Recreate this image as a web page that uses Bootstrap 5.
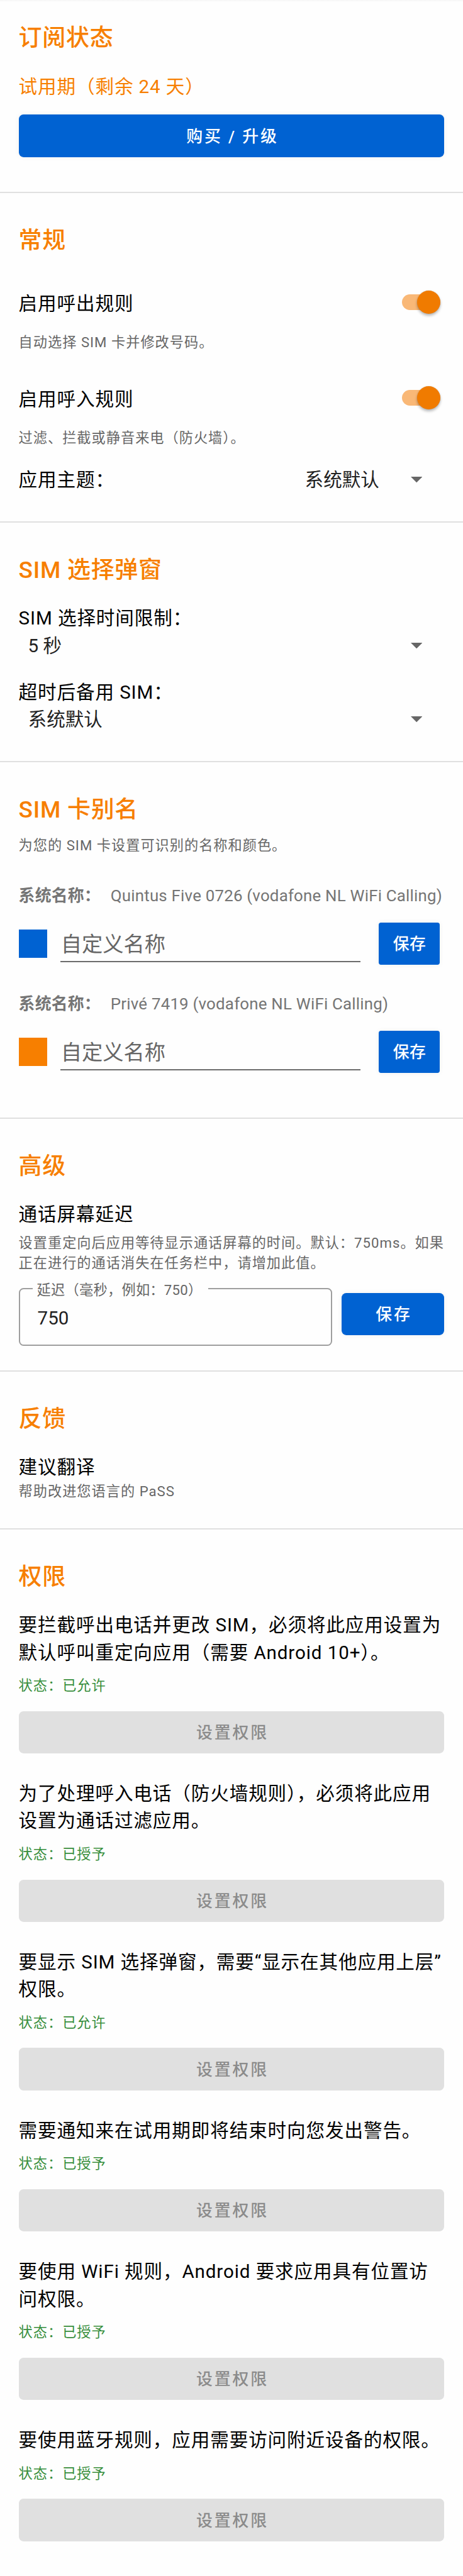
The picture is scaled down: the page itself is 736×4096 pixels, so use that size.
<!DOCTYPE html>
<html lang="zh-CN">
<head>
  <meta charset="UTF-8">
  <meta name="viewport" content="width=device-width, initial-scale=1">
  <title>设置</title>
  <link href="https://cdn.jsdelivr.net/npm/bootstrap@5.3.2/dist/css/bootstrap.min.css" rel="stylesheet">
  <style>
    body {
      font-family: Roboto, "Noto Sans CJK SC", sans-serif;
      color: #000;
      background: #fefefe;
    }
    .topline { height: 3px; margin-bottom: -3px; background: linear-gradient(#f5f5f5, #fefefe); }
    .section {
      padding: 54px 29.6px 0;
      border-bottom: 2px solid #e0e0e0;
    }
    .section h2 {
      margin: 0 0 -1px;
      font-size: 36.96px;
      line-height: 44px;
      font-weight: 500;
      letter-spacing: .75px;
      color: #f77f00;
    }
    #subscription { height: 307px; padding-top: 39px; }
    #general { height: 524px; }
    #popup { height: 381px; }
    #aliases { height: 567px; }
    #advanced { height: 402px; }
    #feedback { height: 251px; }
    #permissions { height: 1664px; border-bottom: 0; }

    .item-title { font-size: 29.57px; line-height: 36px; letter-spacing: .9px; white-space: nowrap; }
    .item-hint { font-size: 22.18px; line-height: 32px; letter-spacing: 1.02px; color: #666; white-space: nowrap; }
    .trial { margin-top: 38px; color: #f77f00; }

    .btn-app {
      --bs-btn-color: #fff;
      --bs-btn-bg: #0062d2;
      --bs-btn-hover-color: #fff;
      --bs-btn-hover-bg: #0056ba;
      --bs-btn-disabled-color: #8b8b8b;
      --bs-btn-disabled-bg: #e0e0e0;
      --bs-btn-disabled-opacity: 1;
      height: 67.4px;
      padding: 1.5px 0 0 3px;
      border: 0;
      border-radius: 7.4px;
      font-size: 25.87px;
      line-height: 66px;
      font-weight: 500;
      letter-spacing: 2.9px;
      box-shadow: 0 0 8px rgba(0, 0, 0, .06);
    }
    .btn-app:disabled { box-shadow: none; }

    /* switch */
    .toggle {
      width: 60.6px;
      height: 25.9px;
      margin: -5px 6.4px 0 0;
      border-radius: 13px;
      background: #f9b877;
    }
    .toggle span {
      width: 37px;
      height: 37px;
      border-radius: 50%;
      background: #f07b00;
      box-shadow: 0 3px 4px rgba(0, 0, 0, .28), 0 0 2px rgba(0, 0, 0, .12);
    }

    /* spinner */
    .picker { font-size: 29.57px; line-height: 36px; color: #212121; padding-right: 35.2px; }
    .picker svg { width: 18.4px; height: 9.3px; fill: #666; }

    .sim-name { font-size: 25.87px; line-height: 32px; color: #757575; white-space: nowrap; }
    .sim-name b { width: 146.2px; letter-spacing: .2px; }
    .sim-name span { letter-spacing: .21px; }
    .sim-row { height: 67px; margin-top: 27.5px; }
    .swatch { width: 45px; height: 45px; }
    .alias-input {
      width: 476.6px;
      height: 48px;
      margin: 10px 29.4px 0 21.6px;
      padding: 0 .5px 6px;
      border: 0;
      border-bottom: 2px solid #6b6b6b;
      background: none;
      font-size: 33.27px;
      line-height: 40px;
      outline: 0;
    }
    .alias-input::placeholder { color: #666; opacity: 1; }
    .btn-alias { width: 96.8px; padding-left: 1px; border-radius: 3.7px; letter-spacing: .4px; }

    .outlined { width: 498.4px; height: 92px; border: 2px solid #9e9e9e; border-radius: 7.4px; }
    .outlined label {
      top: -15px;
      left: 20px;
      width: 279.4px;
      padding-left: 7px;
      font-size: 22.18px;
      line-height: 32px;
      letter-spacing: .3px;
      color: #666;
      background: #fefefe;
      white-space: nowrap;
    }
    .outlined input {
      padding: 4px 28px 0;
      border: 0;
      background: none;
      font-size: 29.57px;
      color: #212121;
      outline: 0;
    }

    .permission { margin-bottom: 43px; }
    .permission .item-title { line-height: 43.2px; }
    .permission .state { margin: 14.5px 0 24.5px; color: #388e3c; }
  </style>
</head>
<body>
  <div class="topline"></div>

  <section class="section" id="subscription">
    <h2>订阅状态</h2>
    <div class="item-title trial">试用期（剩余 24 天）</div>
    <button class="btn btn-app w-100 d-block" style="margin-top: 26.4px">购买 / 升级</button>
  </section>

  <section class="section" id="general">
    <h2>常规</h2>
    <div class="d-flex justify-content-between align-items-center" style="margin-top: 61px">
      <div class="item-title">启用呼出规则</div>
      <div class="toggle d-flex justify-content-end align-items-center"><span></span></div>
    </div>
    <div class="item-hint" style="margin-top: 27px">自动选择 SIM 卡并修改号码。</div>
    <div class="d-flex justify-content-between align-items-center" style="margin-top: 57px">
      <div class="item-title">启用呼入规则</div>
      <div class="toggle d-flex justify-content-end align-items-center"><span></span></div>
    </div>
    <div class="item-hint" style="margin-top: 27px">过滤、拦截或静音来电（防火墙）。</div>
    <div class="d-flex justify-content-between" style="margin-top: 33px">
      <div class="item-title">应用主题：</div>
      <div class="picker d-flex align-items-center" style="gap: 50px">系统默认
        <svg viewBox="0 0 10 5"><path d="M0 0h10L5 5z"/></svg>
      </div>
    </div>
  </section>

  <section class="section" id="popup">
    <h2>SIM 选择弹窗</h2>
    <div class="item-title" style="margin-top: 37px">SIM 选择时间限制：</div>
    <div class="picker d-flex justify-content-between align-items-center" style="margin-top: 7.5px; padding-left: 15px">5 秒
      <svg viewBox="0 0 10 5"><path d="M0 0h10L5 5z"/></svg>
    </div>
    <div class="item-title" style="margin-top: 38px">超时后备用 SIM：</div>
    <div class="picker d-flex justify-content-between align-items-center" style="margin-top: 7.5px; padding-left: 15px">系统默认
      <svg viewBox="0 0 10 5"><path d="M0 0h10L5 5z"/></svg>
    </div>
  </section>

  <section class="section" id="aliases">
    <h2>SIM 卡别名</h2>
    <div class="item-hint" style="margin-top: 19px">为您的 SIM 卡设置可识别的名称和颜色。</div>
    <div class="sim-name d-flex" style="margin-top: 47.5px"><b>系统名称：</b><span>Quintus Five 0726 (vodafone NL WiFi Calling)</span></div>
    <div class="sim-row d-flex align-items-center">
      <div class="swatch" style="background: #0062d2"></div>
      <input class="alias-input" type="text" placeholder="自定义名称">
      <button class="btn btn-app btn-alias">保存</button>
    </div>
    <div class="sim-name d-flex" style="margin-top: 45.5px"><b>系统名称：</b><span>Privé 7419 (vodafone NL WiFi Calling)</span></div>
    <div class="sim-row d-flex align-items-center">
      <div class="swatch" style="background: #f77f00"></div>
      <input class="alias-input" type="text" placeholder="自定义名称">
      <button class="btn btn-app btn-alias">保存</button>
    </div>
  </section>

  <section class="section" id="advanced">
    <h2>高级</h2>
    <div class="item-title" style="margin-top: 37px">通话屏幕延迟</div>
    <div class="item-hint" style="margin-top: 10.6px; line-height: 32.8px">设置重定向后应用等待显示通话屏幕的时间。默认：750ms。如果<br>正在进行的通话消失在任务栏中，请增加此值。</div>
    <div class="d-flex" style="margin-top: 23px; gap: 14.6px">
      <div class="outlined position-relative">
        <label class="position-absolute" for="delay">延迟（毫秒，例如：750）</label>
        <input class="w-100 h-100" id="delay" type="text" value="750">
      </div>
      <button class="btn btn-app flex-fill" style="margin-top: 7.4px">保存</button>
    </div>
  </section>

  <section class="section" id="feedback">
    <h2>反馈</h2>
    <div class="item-title" style="margin-top: 36.5px">建议翻译</div>
    <div class="item-hint" style="margin-top: 4px">帮助改进您语言的 PaSS</div>
  </section>

  <section class="section" id="permissions">
    <h2 style="margin-bottom: 33.4px">权限</h2>
    <div class="permission">
      <div class="item-title">要拦截呼出电话并更改 SIM，必须将此应用设置为<br>默认呼叫重定向应用（需要 Android 10+）。</div>
      <div class="item-hint state">状态：已允许</div>
      <button class="btn btn-app w-100 d-block" disabled>设置权限</button>
    </div>
    <div class="permission">
      <div class="item-title">为了处理呼入电话（防火墙规则），必须将此应用<br>设置为通话过滤应用。</div>
      <div class="item-hint state">状态：已授予</div>
      <button class="btn btn-app w-100 d-block" disabled>设置权限</button>
    </div>
    <div class="permission">
      <div class="item-title">要显示 SIM 选择弹窗，需要“显示在其他应用上层”<br>权限。</div>
      <div class="item-hint state">状态：已允许</div>
      <button class="btn btn-app w-100 d-block" disabled>设置权限</button>
    </div>
    <div class="permission">
      <div class="item-title">需要通知来在试用期即将结束时向您发出警告。</div>
      <div class="item-hint state">状态：已授予</div>
      <button class="btn btn-app w-100 d-block" disabled>设置权限</button>
    </div>
    <div class="permission">
      <div class="item-title">要使用 WiFi 规则，Android 要求应用具有位置访<br>问权限。</div>
      <div class="item-hint state">状态：已授予</div>
      <button class="btn btn-app w-100 d-block" disabled>设置权限</button>
    </div>
    <div class="permission">
      <div class="item-title">要使用蓝牙规则，应用需要访问附近设备的权限。</div>
      <div class="item-hint state">状态：已授予</div>
      <button class="btn btn-app w-100 d-block" disabled>设置权限</button>
    </div>
  </section>

  <script src="https://cdn.jsdelivr.net/npm/bootstrap@5.3.2/dist/js/bootstrap.bundle.min.js"></script>
</body>
</html>
